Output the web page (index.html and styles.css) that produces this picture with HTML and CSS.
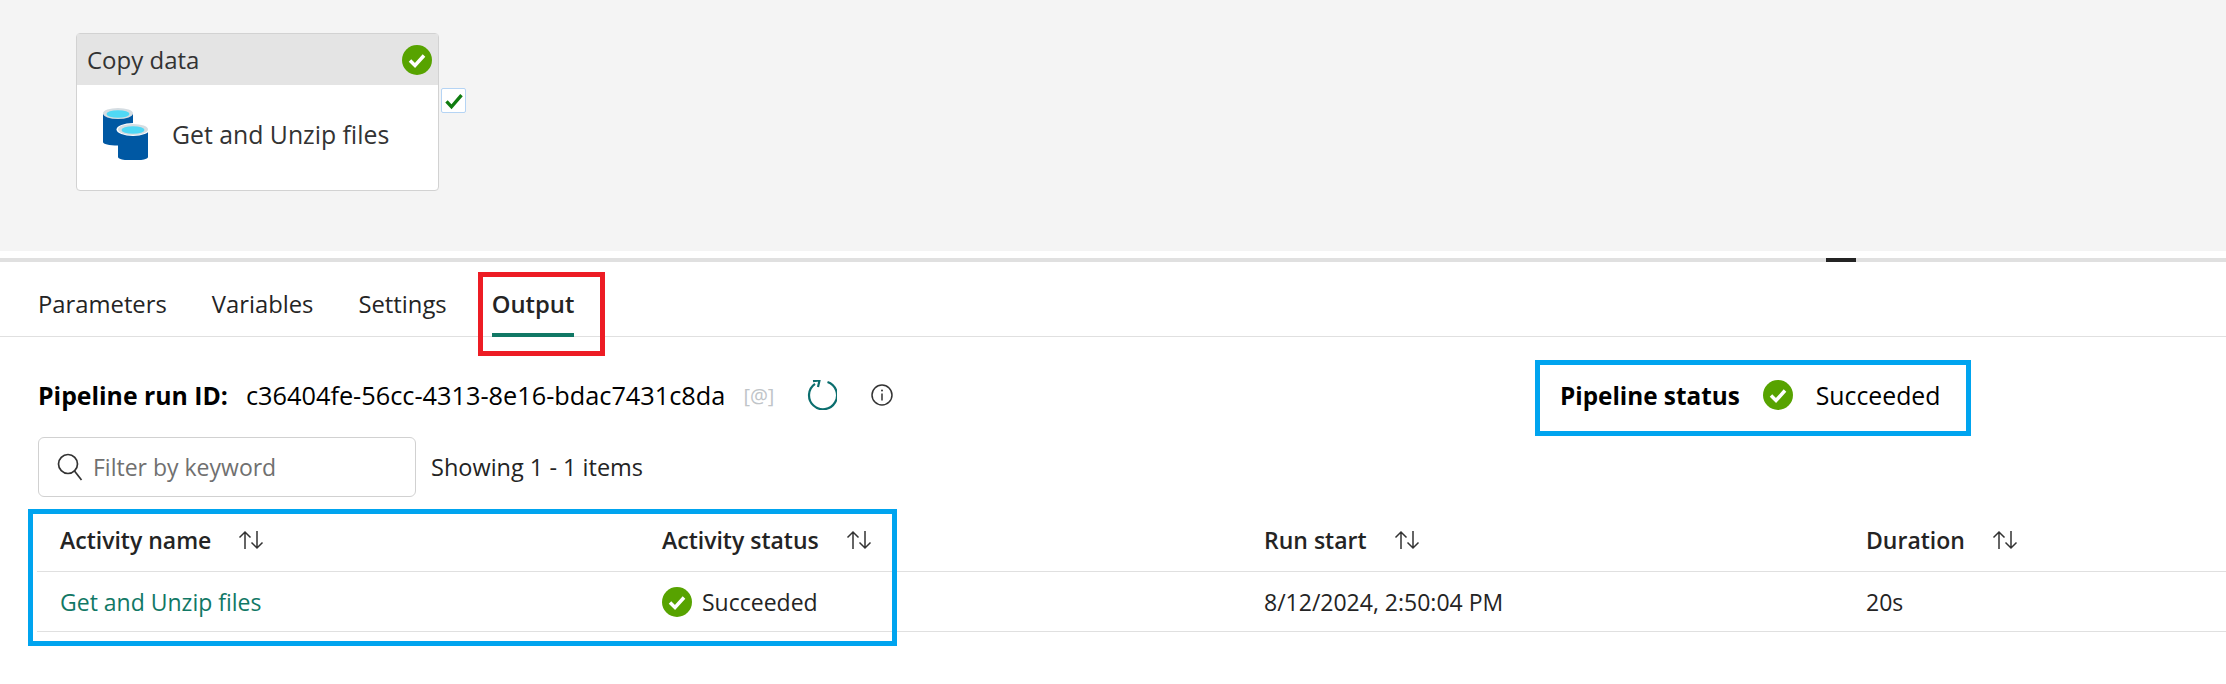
FILE: index.html
```html
<!DOCTYPE html>
<html lang="en">
<head>
    <meta charset="UTF-8">
    <meta name="viewport" content="width=device-width, initial-scale=1.0">
    <title>Pipeline output</title>
    <link rel="stylesheet" href="styles.css">
</head>
<body>
    <div class="canvas">
        <div class="activity">
            <div class="activity-head">
                <span>Copy data</span>
                <svg class="check-icon" viewBox="0 0 30 30"><circle cx="15" cy="15" r="15" fill="#57a300"></circle><path d="M8 15.500l5 5 9-10" fill="none" stroke="#fff" stroke-width="3.500"></path></svg>
            </div>
            <div class="activity-body">
                <svg class="db-icon" viewBox="0 0 45 52">
                    <path d="M0 6v28c0 2 6 3.500 15 3.500s15-1.500 15-3.500V6z" fill="#0058a3"></path>
                    <ellipse cx="15" cy="5.500" rx="15" ry="5.500" fill="#d5dde2"></ellipse>
                    <ellipse cx="15" cy="6" rx="11.500" ry="3.800" fill="#50d8f5"></ellipse>
                    <path d="M15 22v27c0 2 6 3.500 15 3.500s15-1.500 15-3.500V22z" fill="#0058a3"></path>
                    <ellipse cx="30" cy="21.500" rx="16.500" ry="6.500" fill="#fff"></ellipse>
                    <ellipse cx="30" cy="21.500" rx="15" ry="5.500" fill="#d5dde2"></ellipse>
                    <ellipse cx="30" cy="22" rx="11.500" ry="3.800" fill="#50d8f5"></ellipse>
                </svg>
                <span class="activity-name">Get and Unzip files</span>
            </div>
            <div class="activity-port">
                <svg viewBox="0 0 24 24"><path d="M3 12.500l6 6.500L21 5" fill="none" stroke="#107c10" stroke-width="4"></path></svg>
            </div>
        </div>
    </div>

    <div class="splitter"><span class="splitter-handle"></span></div>

    <div class="tabs">
        <span class="tab">Parameters</span>
        <span class="tab">Variables</span>
        <span class="tab">Settings</span>
        <span class="tab active">Output</span>
    </div>

    <div class="run-row">
        <div class="run-id">
            <b>Pipeline run ID:</b>
            <span class="run-value">c36404fe-56cc-4313-8e16-bdac7431c8da</span>
            <span class="at-token">[@]</span>
            <svg class="refresh-icon" viewBox="0 0 30 30">
                <path d="M8 3.800A14 14 0 1 0 20.500 2" fill="none" stroke="#0b6e6e" stroke-width="2.200"></path>
                <path d="M6 1.200L12.500 0.500 11 7" fill="none" stroke="#0b6e6e" stroke-width="2.200"></path>
            </svg>
            <svg class="info-icon" viewBox="0 0 22 22">
                <circle cx="11" cy="11" r="10" fill="none" stroke="#333" stroke-width="1.500"></circle>
                <path d="M11 9.500V16.500" stroke="#333" stroke-width="1.500"></path>
                <circle cx="11" cy="6.500" r="1" fill="#333"></circle>
            </svg>
        </div>
        <div class="pipeline-status">
            <b>Pipeline status</b>
            <svg class="check-icon" viewBox="0 0 30 30"><circle cx="15" cy="15" r="15" fill="#57a300"></circle><path d="M8 15.500l5 5 9-10" fill="none" stroke="#fff" stroke-width="3.500"></path></svg>
            <span>Succeeded</span>
        </div>
    </div>

    <div class="filter-row">
        <div class="filter-box">
            <svg viewBox="0 0 26 28"><circle cx="11" cy="11" r="9.500" fill="none" stroke="#333" stroke-width="1.700"></circle><path d="M17.500 18l7 9" stroke="#333" stroke-width="1.700"></path></svg>
            <span>Filter by keyword</span>
        </div>
        <span class="item-count">Showing 1 - 1 items</span>
    </div>

    <div class="table">
        <div class="table-row table-head">
            <div class="cell">Activity name <svg class="sort-icon" viewBox="0 0 28 20"><path d="M8 19V2M2.500 7.500L8 2l5.500 5.500M20 1v17M14.500 12.500L20 18l5.500-5.500" fill="none" stroke="#333" stroke-width="1.500"></path></svg></div>
            <div class="cell">Activity status <svg class="sort-icon" viewBox="0 0 28 20"><path d="M8 19V2M2.500 7.500L8 2l5.500 5.500M20 1v17M14.500 12.500L20 18l5.500-5.500" fill="none" stroke="#333" stroke-width="1.500"></path></svg></div>
            <div class="cell">Run start <svg class="sort-icon" viewBox="0 0 28 20"><path d="M8 19V2M2.500 7.500L8 2l5.500 5.500M20 1v17M14.500 12.500L20 18l5.500-5.500" fill="none" stroke="#333" stroke-width="1.500"></path></svg></div>
            <div class="cell">Duration <svg class="sort-icon" viewBox="0 0 28 20"><path d="M8 19V2M2.500 7.500L8 2l5.500 5.500M20 1v17M14.500 12.500L20 18l5.500-5.500" fill="none" stroke="#333" stroke-width="1.500"></path></svg></div>
        </div>
        <div class="table-row">
            <div class="cell activity-link">Get and Unzip files</div>
            <div class="cell status-cell">
                <svg class="check-icon" viewBox="0 0 30 30"><circle cx="15" cy="15" r="15" fill="#57a300"></circle><path d="M8 15.500l5 5 9-10" fill="none" stroke="#fff" stroke-width="3.500"></path></svg>
                Succeeded
            </div>
            <div class="cell">8/12/2024, 2:50:04 PM</div>
            <div class="cell">20s</div>
        </div>
    </div>

    <div class="callout callout-red"></div>
    <div class="callout callout-status"></div>
    <div class="callout callout-table"></div>
</body>
</html>
```

FILE: styles.css
```css
* {
    margin: 0;
    padding: 0;
    box-sizing: border-box;
    font-family: "Open Sans", "Noto Sans", sans-serif;
}

html, body {
    height: 100%;
    overflow: hidden;
}

body {
    background-color: #fff;
    color: #242424;
    font-size: 23px;
    position: relative;
}

/* pipeline canvas */
.canvas {
    background-color: #f4f4f4;
    height: 251px;
    padding: 33px 0 0 76px;
}

.activity {
    background-color: #fff;
    border: 1.500px solid #d2d2d2;
    border-radius: 4px;
    width: 363px;
    height: 158px;
    position: relative;
}

.activity-head {
    background-color: #e4e4e4;
    height: 51px;
    display: flex;
    align-items: center;
    justify-content: space-between;
    padding: 0 6px 0 10px;
    font-size: 24px;
    color: #333;
}

.activity-body {
    display: flex;
    align-items: center;
    gap: 24px;
    padding: 23px 0 0 26px;
}

.activity-name {
    font-size: 24.800px;
    color: #333;
}

.db-icon {
    width: 45px;
    height: 52px;
}

.activity-port {
    position: absolute;
    left: 364px;
    top: 54px;
    width: 25px;
    height: 25px;
    background-color: #fff;
    border: 1.500px solid #b5d4f4;
    border-radius: 2px;
    display: flex;
    align-items: center;
    justify-content: center;
}

.activity-port svg {
    width: 20px;
    height: 20px;
}

.check-icon {
    width: 30px;
    height: 30px;
    flex-shrink: 0;
}

/* splitter */
.splitter {
    margin-top: 7px;
    height: 4px;
    background-color: #e0e0e0;
    position: relative;
}

.splitter-handle {
    position: absolute;
    left: 1826px;
    top: 0;
    width: 30px;
    height: 4px;
    background-color: #242424;
}

/* tabs */
.tabs {
    height: 75px;
    border-bottom: 1.500px solid #e0e0e0;
    display: flex;
    gap: 45px;
    padding-left: 38px;
}

.tab {
    line-height: 84px;
    height: 75px;
    font-size: 23.800px;
}

.tab.active {
    font-weight: 600;
    border-bottom: 4px solid #117865;
}

/* run id row */
.run-row {
    display: flex;
    align-items: center;
    height: 78px;
    padding: 38px 0 0 38px;
    color: #000;
    font-size: 24.800px;
}

.run-id {
    width: 1522px;
    display: flex;
    align-items: center;
}

.run-row b {
    font-weight: 700;
}

.pipeline-status b {
    font-size: 24.300px;
}

.run-value {
    margin-left: 18px;
    font-size: 25.300px;
}

.at-token {
    margin-left: 18px;
    color: #c0c4c8;
    font-size: 20px;
}

.refresh-icon {
    width: 30px;
    height: 30px;
    margin-left: 33px;
}

.info-icon {
    width: 22px;
    height: 22px;
    margin-left: 34px;
}

.pipeline-status {
    display: flex;
    align-items: center;
    gap: 23px;
}

/* filter row */
.filter-row {
    display: flex;
    align-items: center;
    gap: 15px;
    padding-left: 38px;
    margin-top: 22px;
}

.filter-box {
    width: 378px;
    height: 60px;
    border: 1.500px solid #d1d1d1;
    border-radius: 6px;
    display: flex;
    align-items: center;
    gap: 10px;
    padding-left: 18px;
    color: #707070;
}

.filter-box svg {
    width: 26px;
    height: 28px;
}

.item-count {
    font-size: 23.500px;
}

/* table */
.table {
    margin: 12px 0 0 37px;
}

.table-row {
    display: grid;
    grid-template-columns: repeat(3, 602px) 1fr;
    height: 60px;
    border-bottom: 1.500px solid #e0e0e0;
    padding: 0 0 0 23px;
    align-items: center;
}

.table-head {
    height: 63px;
    font-weight: 600;
}

.cell {
    display: flex;
    align-items: center;
}

.sort-icon {
    width: 28px;
    height: 20px;
    margin-left: 26px;
}

.activity-link {
    color: #117865;
}

.status-cell {
    gap: 10px;
}

/* screenshot callouts */
.callout {
    position: absolute;
    border: 5px solid #00a4ef;
}

.callout-red {
    left: 478px;
    top: 272px;
    width: 127px;
    height: 84px;
    border-color: #ed1c24;
}

.callout-status {
    left: 1535px;
    top: 360px;
    width: 436px;
    height: 76px;
}

.callout-table {
    left: 28px;
    top: 509px;
    width: 869px;
    height: 137px;
}
```
